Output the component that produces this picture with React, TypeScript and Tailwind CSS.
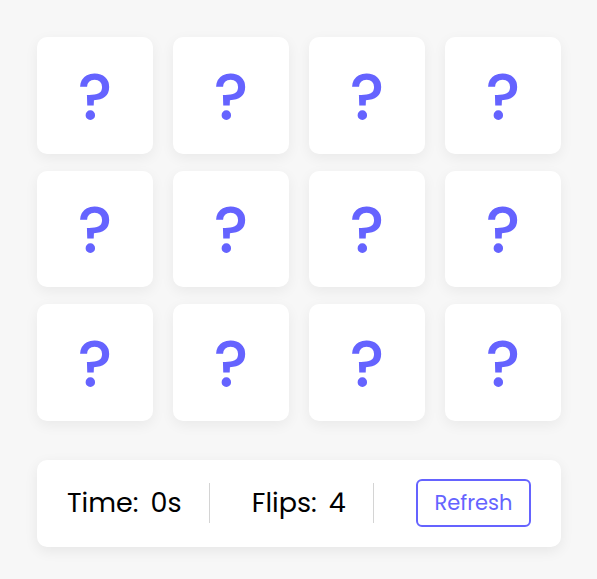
import React from 'react';

const cards = Array.from({ length: 12 }, (_, i) => i);

function Card() {
  return (
    <div className="flex h-[116.5px] items-center justify-center rounded-[10px] bg-white shadow-[0_4px_14px_rgba(0,0,0,0.06)]">
      <span className="pt-[4px] text-[65px] font-medium leading-none text-[#6563ff]">?</span>
    </div>
  );
}

export default function App() {
  return (
    <div
      className="min-h-[579px] w-full bg-[#f7f7f7] pt-[37px] px-[37px]"
      style={{ fontFamily: "Poppins, Inter, 'Open Sans', sans-serif" }}
    >
      <div className="w-[524px]">
        <div className="grid grid-cols-4 gap-x-5 gap-y-[17px]">
          {cards.map((i) => (
            <Card key={i} />
          ))}
        </div>

        <div className="mt-[39px] flex h-[87px] items-center justify-between rounded-[10px] bg-white px-[30px] shadow-[0_4px_14px_rgba(0,0,0,0.07)]">
          <div className="flex items-center border-r border-[#d4d4d4] pr-[27px] text-[27px] text-black">
            <span>Time:</span>
            <span className="ml-[12px]">0s</span>
          </div>
          <div className="flex items-center border-r border-[#d4d4d4] pr-[27px] text-[27px] text-black">
            <span>Flips:</span>
            <span className="ml-[12px]">4</span>
          </div>
          <button className="flex h-[48px] w-[115px] items-center justify-center rounded-[6px] border-2 border-[#6563ff] text-[21px] text-[#6563ff]">
            Refresh
          </button>
        </div>
      </div>
    </div>
  );
}
